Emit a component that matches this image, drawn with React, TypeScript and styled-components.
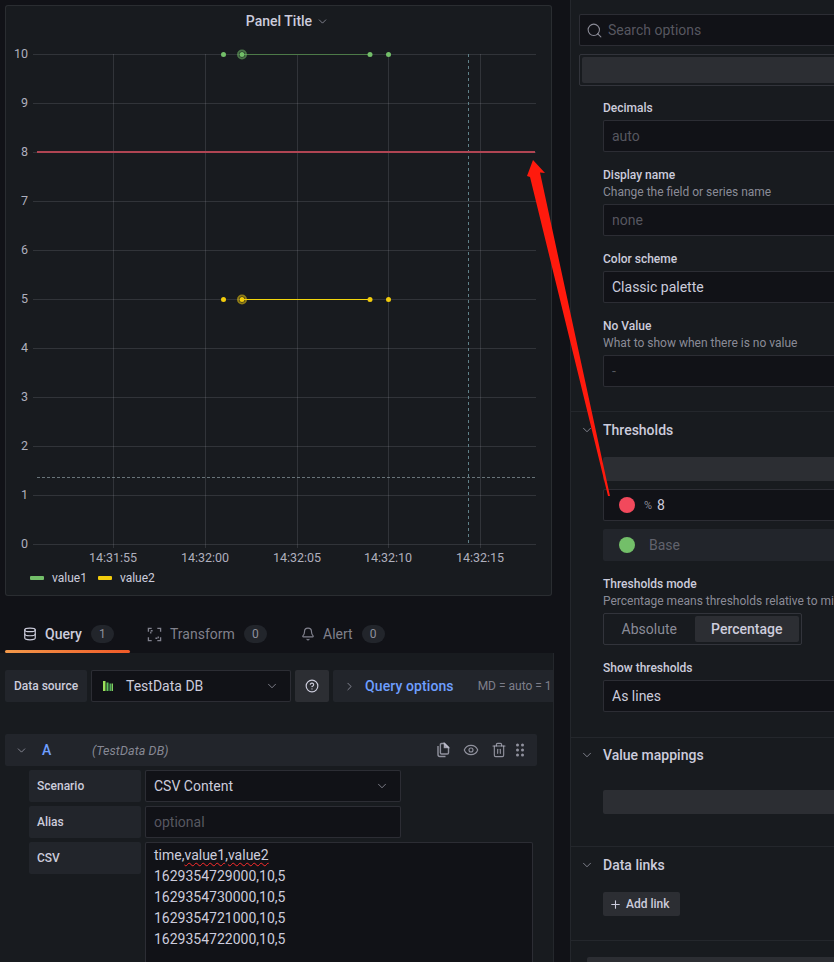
import React from 'react';
import styled, { createGlobalStyle } from 'styled-components';
import { Bell, ChevronDown, ChevronRight, CircleHelp, Database, Eye, Plus, Search, Trash2 } from 'lucide-react';

const GlobalStyle = createGlobalStyle`
  html, body {
    margin: 0;
    padding: 0;
    height: 100%;
    background: #111217;
    color: #ccccdc;
    font-family: Roboto, "Liberation Sans", sans-serif;
    overflow: hidden;
  }
  * { box-sizing: border-box; }
`;

const Page = styled.div`
  position: relative;
  width: 834px;
  height: 962px;
  display: flex;
  overflow: hidden;
`;

const LeftColumn = styled.div`
  width: 554px;
  flex: none;
  display: flex;
  flex-direction: column;
  padding-top: 5px;
`;

const Panel = styled.div`
  width: 547px;
  height: 591px;
  margin-left: 5px;
  background: #181b1f;
  border: 1px solid rgba(204, 204, 220, 0.1);
  border-radius: 3px;
  flex: none;
`;

const PanelTitle = styled.div`
  height: 30px;
  margin-bottom: 1px;
  display: flex;
  align-items: center;
  justify-content: center;
  gap: 4px;
  padding-left: 18px;
  font-size: 14px;
  font-weight: 500;
  color: #ccccdc;
`;

const ChartSvg = styled.svg`
  display: block;
`;

const Legend = styled.div`
  display: flex;
  align-items: center;
  padding: 3px 0 0 24px;
  font-size: 12px;
  color: #ccccdc;
`;

const LegendItem = styled.div`
  display: flex;
  align-items: center;
  gap: 8px;
  margin-right: 11px;
`;

const LegendSwatch = styled.span<{ $color: string }>`
  width: 14px;
  height: 4px;
  border-radius: 1px;
  background: ${(p) => p.$color};
`;

const Tabs = styled.div`
  height: 57px;
  padding: 24px 0 0 5px;
  display: flex;
  flex: none;
`;

const Tab = styled.div<{ $active?: boolean; $width: number }>`
  width: ${(p) => p.$width}px;
  height: 33px;
  position: relative;
  display: flex;
  align-items: flex-start;
  padding: 5px 0 0 18px;
  gap: 8px;
  font-size: 14px;
  font-weight: ${(p) => (p.$active ? 500 : 400)};
  color: ${(p) => (p.$active ? '#ccccdc' : 'rgba(204, 204, 220, 0.6)')};
  &::after {
    content: '';
    display: ${(p) => (p.$active ? 'block' : 'none')};
    position: absolute;
    left: 0;
    width: 125px;
    bottom: 0;
    height: 3px;
    border-radius: 2px;
    background: linear-gradient(90deg, #f2994a, #f05a28);
  }
`;

const TabIconSlot = styled.span`
  height: 18px;
  display: flex;
  align-items: center;
`;

const TabLabel = styled.span`
  line-height: 18px;
`;

const TabCount = styled.span`
  width: 23px;
  height: 18px;
  margin-left: 1px;
  border-radius: 9px;
  background: #22252b;
  display: flex;
  align-items: center;
  justify-content: center;
  font-size: 12px;
  font-weight: 400;
  color: rgba(204, 204, 220, 0.65);
`;

const QueryPane = styled.div`
  flex: 1;
  background: #181b1f;
  border-right: 1px solid rgba(204, 204, 220, 0.07);
  padding: 17px 0 0 5px;
  min-height: 0;
  overflow: hidden;
`;

const Row = styled.div<{ $bottom?: number }>`
  display: flex;
  gap: 4px;
  margin-bottom: ${(p) => p.$bottom ?? 4}px;
`;

const DataSourceLabel = styled.div`
  width: 82px;
  height: 32px;
  background: #22252b;
  border-radius: 2px;
  display: flex;
  align-items: center;
  justify-content: center;
  font-size: 12px;
  font-weight: 500;
`;

const FieldBox = styled.div<{ $width?: number; $muted?: boolean }>`
  width: ${(p) => (p.$width ? `${p.$width}px` : 'auto')};
  height: 32px;
  flex: none;
  display: flex;
  align-items: center;
  padding: 0 8px;
  background: #111217;
  border: 1px solid rgba(204, 204, 220, 0.15);
  border-radius: 2px;
  font-size: 14px;
  color: ${(p) => (p.$muted ? 'rgba(204, 204, 220, 0.38)' : '#ccccdc')};
`;

const SelectText = styled.span`
  flex: 1;
`;

const SelectChevron = styled(ChevronDown)`
  margin-right: 3px;
  color: rgba(204, 204, 220, 0.6);
`;

const DataSourceIcon = styled.svg`
  margin: 0 12px 0 2px;
`;

const SquareButton = styled.div`
  width: 34px;
  height: 32px;
  background: #2c2e33;
  border-radius: 2px;
  display: flex;
  align-items: center;
  justify-content: center;
`;

const QueryOptions = styled.div`
  flex: 1;
  height: 32px;
  background: #22252b;
  border-radius: 2px 0 0 2px;
  display: flex;
  align-items: center;
  padding-left: 10px;
  overflow: hidden;
  white-space: nowrap;
`;

const QueryOptionsLink = styled.span`
  margin: 0 24px 0 9px;
  font-size: 14px;
  font-weight: 500;
  letter-spacing: 0.1px;
  color: #6e9fff;
`;

const QueryOptionsMeta = styled.span`
  font-size: 12px;
  color: rgba(204, 204, 220, 0.55);
`;

const QueryHeader = styled.div`
  width: 532px;
  height: 32px;
  margin-top: 32px;
  margin-bottom: 4px;
  background: #22252b;
  border-radius: 2px;
  display: flex;
  align-items: center;
  padding: 0 13px 0 10px;
`;

const QueryLetter = styled.span`
  width: 50px;
  margin-left: 14px;
  font-size: 14px;
  font-weight: 500;
  color: #6e9fff;
`;

const QueryDatasource = styled.span`
  flex: 1;
  font-size: 12.5px;
  font-style: italic;
  letter-spacing: 0.1px;
  color: rgba(204, 204, 220, 0.6);
`;

const QueryActions = styled.div`
  display: flex;
  align-items: center;
  gap: 12px;
  color: rgba(204, 204, 220, 0.65);
`;

const QueryBody = styled.div`
  margin-left: 24px;
`;

const FieldLabel = styled.div`
  width: 112px;
  height: 32px;
  flex: none;
  background: #22252b;
  border-radius: 2px;
  display: flex;
  align-items: center;
  padding-left: 8px;
  font-size: 12px;
  font-weight: 500;
`;

const CsvArea = styled.div`
  width: 388px;
  height: 140px;
  padding: 2px 8px;
  background: #111217;
  border: 1px solid rgba(204, 204, 220, 0.15);
  border-radius: 2px;
  font-size: 14px;
  line-height: 21px;
  color: #ccccdc;
`;

const Misspelled = styled.span`
  text-decoration: underline wavy #ff2b2b 1px;
  text-underline-offset: 2px;
`;

const OptionsPanel = styled.div`
  width: 264px;
  margin-left: 16px;
  flex: none;
  background: #181b1f;
  border-left: 1px solid rgba(204, 204, 220, 0.07);
  padding-top: 14px;
  overflow: hidden;
`;

const SearchBox = styled(FieldBox)`
  width: 300px;
  margin-left: 8px;
  padding-left: 6px;
  gap: 5px;
`;

const CategoryBox = styled.div`
  width: 300px;
  height: 32px;
  margin: 8px 0 0 8px;
  padding: 2px;
  border: 1px solid rgba(204, 204, 220, 0.15);
  border-radius: 2px;
`;

const Placeholder = styled.div<{ $height: number; $top?: number }>`
  height: ${(p) => p.$height}px;
  margin-top: ${(p) => p.$top ?? 0}px;
  background: #2c2e33;
  border-radius: 2px;
`;

const SectionBar = styled(Placeholder)`
  width: 300px;
`;

const Section = styled.div<{ $top: number; $bottom: number }>`
  padding: ${(p) => p.$top}px 0 ${(p) => p.$bottom}px 32px;
  border-bottom: 1px solid rgba(204, 204, 220, 0.07);
`;

const SectionHeader = styled.div`
  position: relative;
  height: 18px;
  display: flex;
  align-items: center;
  font-size: 14px;
  font-weight: 500;
`;

const SectionChevron = styled(ChevronDown)`
  position: absolute;
  left: -23px;
  top: 2px;
  color: rgba(204, 204, 220, 0.6);
`;

const Field = styled.div<{ $top?: number; $bottom?: number }>`
  margin-top: ${(p) => p.$top ?? 0}px;
  margin-bottom: ${(p) => p.$bottom ?? 14}px;
`;

const Label = styled.div`
  padding-top: 1px;
  font-size: 12px;
  font-weight: 500;
  line-height: 16px;
`;

const Description = styled.div`
  padding-top: 1px;
  font-size: 12px;
  line-height: 16px;
  color: rgba(204, 204, 220, 0.65);
  white-space: nowrap;
`;

const WideField = styled(FieldBox)`
  width: 300px;
  margin-top: 4px;
`;

const ThresholdRow = styled(FieldBox)<{ $base?: boolean }>`
  width: 300px;
  padding-left: 15px;
  margin-top: 8px;
  background: ${(p) => (p.$base ? '#22252b' : '#111217')};
  border-color: ${(p) => (p.$base ? 'transparent' : 'rgba(204, 204, 220, 0.15)')};
`;

const ThresholdDot = styled.span<{ $color: string }>`
  width: 16px;
  height: 16px;
  border-radius: 50%;
  background: ${(p) => p.$color};
  flex: none;
`;

const Percent = styled.span`
  margin: 0 5px 0 9px;
  font-size: 11px;
  color: rgba(204, 204, 220, 0.65);
`;

const BaseText = styled.span`
  margin-left: 14px;
  color: rgba(204, 204, 220, 0.38);
`;

const RadioGroup = styled.div`
  width: 199px;
  height: 32px;
  margin-top: 4px;
  padding: 2px;
  display: flex;
  gap: 2px;
  border: 1px solid rgba(204, 204, 220, 0.15);
  border-radius: 2px;
`;

const RadioOption = styled.div<{ $active?: boolean; $width: number }>`
  width: ${(p) => p.$width}px;
  display: flex;
  align-items: center;
  justify-content: center;
  font-size: 14px;
  font-weight: ${(p) => (p.$active ? 500 : 400)};
  color: ${(p) => (p.$active ? '#ccccdc' : 'rgba(204, 204, 220, 0.65)')};
  background: ${(p) => (p.$active ? '#2c2e33' : 'transparent')};
  border-radius: 2px;
`;

const AddLink = styled.div`
  width: 77px;
  height: 24px;
  margin-top: 18px;
  background: #2c2e33;
  border-radius: 2px;
  display: flex;
  align-items: center;
  padding-left: 6px;
  gap: 4px;
  font-size: 12px;
  font-weight: 500;
`;

const FooterBar = styled(Placeholder)`
  width: 280px;
  margin: 16px 0 0 16px;
`;

const DotsSvg = styled.svg`
  margin-left: -3px;
`;

const Arrow = styled.svg`
  position: absolute;
  left: 0;
  top: 0;
  pointer-events: none;
`;

const yTicks = [10, 9, 8, 7, 6, 5, 4, 3, 2, 1, 0];
const xTicks: [number, string][] = [
  [113, '14:31:55'],
  [205, '14:32:00'],
  [297, '14:32:05'],
  [388, '14:32:10'],
  [480, '14:32:15'],
];
const yPos = (v: number) => 54.5 + (10 - v) * 49;
const pointXs = [223.5, 242, 370, 388.5];

const Series = ({ value, color, lineColor }: { value: number; color: string; lineColor: string }) => {
  const y = yPos(value);
  return (
    <g>
      <line x1={242} x2={370} y1={y} y2={y} stroke={lineColor} strokeWidth={1} />
      <circle cx={242} cy={y} r={4} fill="none" stroke={color} strokeOpacity={0.55} strokeWidth={2} />
      {pointXs.map((x) => (
        <circle key={x} cx={x} cy={y} r={2.5} fill={color} />
      ))}
    </g>
  );
};

const Chart = () => (
  <ChartSvg width={545} height={531} viewBox="6 37 545 531">
    {yTicks.map((v) => (
      <g key={v}>
        <line x1={33} x2={536} y1={yPos(v)} y2={yPos(v)} stroke="rgba(204,204,220,0.14)" />
        <text x={28} y={yPos(v) + 3} textAnchor="end" fontSize={12.5} fill="rgba(204,204,220,0.85)" fontFamily="Roboto">
          {v}
        </text>
      </g>
    ))}
    {xTicks.map(([x, label]) => (
      <g key={label}>
        <line x1={x + 0.5} x2={x + 0.5} y1={54} y2={548} stroke="rgba(204,204,220,0.14)" />
        <text x={x} y={562} textAnchor="middle" fontSize={12.5} fill="rgba(204,204,220,0.85)" fontFamily="Roboto">
          {label}
        </text>
      </g>
    ))}
    <line x1={468.5} x2={468.5} y1={54} y2={544} stroke="#5f8088" strokeDasharray="3 3" />
    <line x1={37} x2={535} y1={477.5} y2={477.5} stroke="#9fb0b5" strokeOpacity={0.6} strokeDasharray="3 2" />
    <line x1={37} x2={535} y1={152} y2={152} stroke="#b04553" strokeWidth={2} />
    <Series value={10} color="#73bf69" lineColor="#4d7a48" />
    <Series value={5} color="#f2cc0c" lineColor="#f2d60c" />
  </ChartSvg>
);

const CopyIcon = () => (
  <svg width={16} height={16} viewBox="0 0 16 16" fill="none" stroke="currentColor" strokeWidth={1.4}>
    <path d="M3 4v8.6c0 1 .8 1.9 1.9 1.9h5.6" />
    <path d="M6.6 1.5h3l3.9 3.9v5.4c0 .7-.5 1.2-1.2 1.2H6.6c-.7 0-1.2-.5-1.2-1.2V2.7c0-.7.5-1.2 1.2-1.2z" />
    <path d="M9.4 1.5v4h4.1l-4.1-4z" fill="currentColor" />
  </svg>
);

const DotsIcon = () => (
  <DotsSvg width={8} height={14} viewBox="0 0 8 14" fill="currentColor">
    {[2, 7, 12].map((y) => (
      <g key={y}>
        <circle cx={1.5} cy={y} r={1.5} />
        <circle cx={6.5} cy={y} r={1.5} />
      </g>
    ))}
  </DotsSvg>
);

const TransformIcon = () => (
  <svg width={15} height={15} viewBox="0 0 16 16" fill="none" stroke="currentColor" strokeWidth={1.4}>
    <path d="M1.5 5V1.5H5M11 1.5h3.5V5M14.5 11v3.5H11M5 14.5H1.5V11" />
    <path d="M4 7V4h3M9 12h3V9" strokeDasharray="2 1" />
  </svg>
);

const App = () => {
  return (
    <Page>
      <GlobalStyle />
      <LeftColumn>
        <Panel>
          <PanelTitle>
            Panel Title
            <ChevronDown size={13} strokeWidth={1.6} color="rgba(204,204,220,0.65)" />
          </PanelTitle>
          <Chart />
          <Legend>
            <LegendItem>
              <LegendSwatch $color="#73bf69" />
              value1
            </LegendItem>
            <LegendItem>
              <LegendSwatch $color="#f2cc0c" />
              value2
            </LegendItem>
          </Legend>
        </Panel>

        <Tabs>
          <Tab $active $width={124}>
            <TabIconSlot>
              <Database size={14} />
            </TabIconSlot>
            <TabLabel>Query</TabLabel>
            <TabCount>1</TabCount>
          </Tab>
          <Tab $width={154}>
            <TabIconSlot>
              <TransformIcon />
            </TabIconSlot>
            <TabLabel>Transform</TabLabel>
            <TabCount>0</TabCount>
          </Tab>
          <Tab $width={110}>
            <TabIconSlot>
              <Bell size={14} />
            </TabIconSlot>
            <TabLabel>Alert</TabLabel>
            <TabCount>0</TabCount>
          </Tab>
        </Tabs>

        <QueryPane>
          <Row $bottom={0}>
            <DataSourceLabel>Data source</DataSourceLabel>
            <FieldBox $width={200}>
              <DataSourceIcon width={12} height={12} viewBox="0 0 12 12">
                <rect x={1} y={1} width={2.5} height={10} fill="#9be05a" />
                <rect x={4.5} y={2.5} width={2} height={8.5} fill="#5fc25a" />
                <rect x={7.5} y={3.5} width={1.5} height={7.5} fill="#4fa85a" />
                <rect x={9.5} y={3.5} width={1.5} height={7.5} fill="#7fd060" />
              </DataSourceIcon>
              <SelectText>TestData DB</SelectText>
              <SelectChevron size={14} strokeWidth={1.6} />
            </FieldBox>
            <SquareButton>
              <CircleHelp size={14} />
            </SquareButton>
            <QueryOptions>
              <ChevronRight size={13} strokeWidth={1.6} color="rgba(204,204,220,0.65)" />
              <QueryOptionsLink>Query options</QueryOptionsLink>
              <QueryOptionsMeta>MD = auto = 1</QueryOptionsMeta>
            </QueryOptions>
          </Row>

          <QueryHeader>
            <ChevronDown size={13} strokeWidth={1.6} color="rgba(204,204,220,0.65)" />
            <QueryLetter>A</QueryLetter>
            <QueryDatasource>(TestData DB)</QueryDatasource>
            <QueryActions>
              <CopyIcon />
              <Eye size={16} strokeWidth={1.7} />
              <Trash2 size={16} strokeWidth={1.7} />
              <DotsIcon />
            </QueryActions>
          </QueryHeader>

          <QueryBody>
            <Row>
              <FieldLabel>Scenario</FieldLabel>
              <FieldBox $width={256}>
                <SelectText>CSV Content</SelectText>
                <SelectChevron size={14} strokeWidth={1.6} />
              </FieldBox>
            </Row>
            <Row>
              <FieldLabel>Alias</FieldLabel>
              <FieldBox $width={256} $muted>
                optional
              </FieldBox>
            </Row>
            <Row>
              <FieldLabel>CSV</FieldLabel>
              <CsvArea>
                time,<Misspelled>value1</Misspelled>,<Misspelled>value2</Misspelled>
                <br />
                1629354729000,10,5
                <br />
                1629354730000,10,5
                <br />
                1629354721000,10,5
                <br />
                1629354722000,10,5
              </CsvArea>
            </Row>
          </QueryBody>
        </QueryPane>
      </LeftColumn>

      <OptionsPanel>
        <SearchBox $muted>
          <Search size={17} strokeWidth={1.5} color="rgba(204,204,220,0.65)" />
          Search options
        </SearchBox>
        <CategoryBox>
          <Placeholder $height={26} />
        </CategoryBox>

        <Section $top={13} $bottom={24}>
          <Field>
            <Label>Decimals</Label>
            <WideField $muted>auto</WideField>
          </Field>
          <Field>
            <Label>Display name</Label>
            <Description>Change the field or series name</Description>
            <WideField $muted>none</WideField>
          </Field>
          <Field>
            <Label>Color scheme</Label>
            <WideField>Classic palette</WideField>
          </Field>
          <Field $bottom={0}>
            <Label>No Value</Label>
            <Description>What to show when there is no value</Description>
            <WideField $muted>-</WideField>
          </Field>
        </Section>

        <Section $top={9} $bottom={25}>
          <SectionHeader>
            <SectionChevron size={14} strokeWidth={1.6} />
            Thresholds
          </SectionHeader>
          <SectionBar $height={24} $top={18} />
          <ThresholdRow>
            <ThresholdDot $color="#f2495c" />
            <Percent>%</Percent>8
          </ThresholdRow>
          <ThresholdRow $base>
            <ThresholdDot $color="#73bf69" />
            <BaseText>Base</BaseText>
          </ThresholdRow>
          <Field $top={14}>
            <Label>Thresholds mode</Label>
            <Description>Percentage means thresholds relative to min &amp; max</Description>
            <RadioGroup>
              <RadioOption $width={87}>Absolute</RadioOption>
              <RadioOption $active $width={105}>
                Percentage
              </RadioOption>
            </RadioGroup>
          </Field>
          <Field $bottom={0}>
            <Label>Show thresholds</Label>
            <WideField>As lines</WideField>
          </Field>
        </Section>

        <Section $top={8} $bottom={32}>
          <SectionHeader>
            <SectionChevron size={14} strokeWidth={1.6} />
            Value mappings
          </SectionHeader>
          <SectionBar $height={24} $top={26} />
        </Section>

        <Section $top={9} $bottom={24}>
          <SectionHeader>
            <SectionChevron size={14} strokeWidth={1.6} />
            Data links
          </SectionHeader>
          <AddLink>
            <Plus size={13} />
            Add link
          </AddLink>
        </Section>

        <FooterBar $height={24} />
      </OptionsPanel>

      <Arrow width={834} height={962} viewBox="0 0 834 962">
        <polygon points="533,160 545,173 540,172.5 610,496 608,496 530,177 527,176" fill="#ff1a0d" />
      </Arrow>
    </Page>
  );
};

export default App;
